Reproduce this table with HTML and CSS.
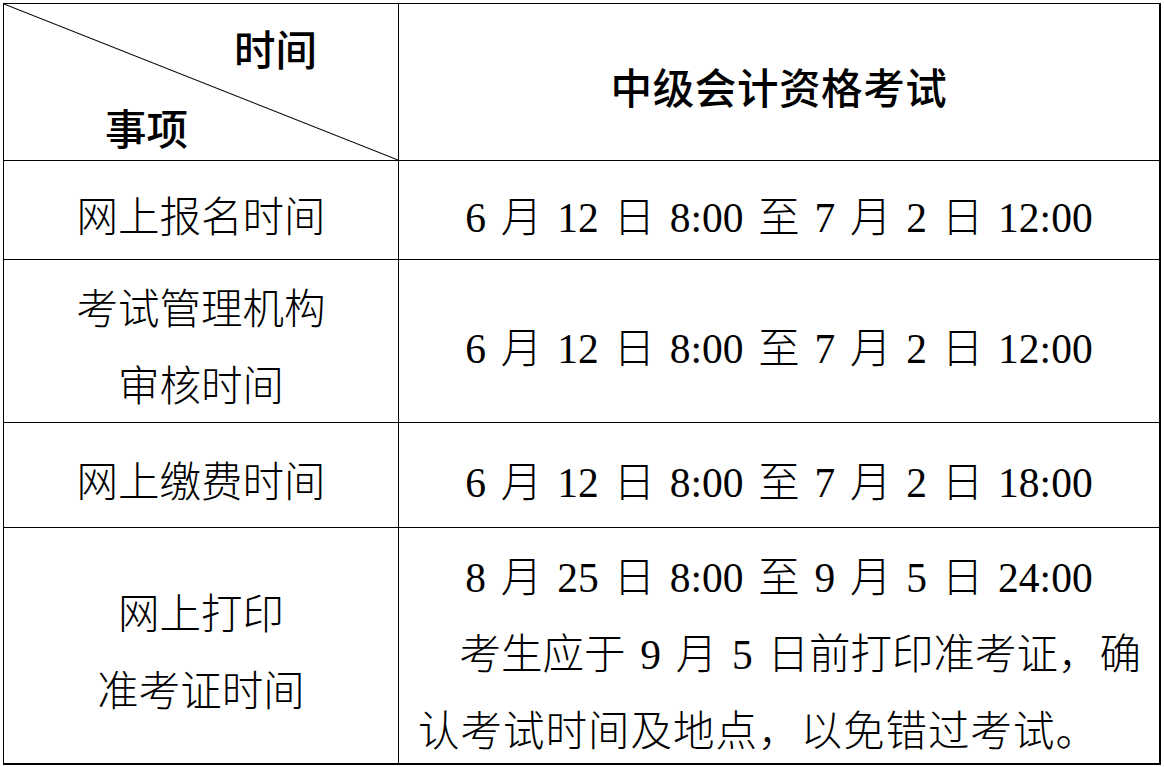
FILE: index.html
```html
<!DOCTYPE html>
<html lang="zh-CN">
<head>
<meta charset="utf-8">
<title>中级会计资格考试时间安排</title>
<link rel="stylesheet" href="styles.css">
</head>
<body>
<div class="sheet">
  <div class="cell head-left">
    <span class="hl-time">时间</span>
    <span class="hl-item">事项</span>
  </div>
  <div class="cell col2 head-right">中级会计资格考试</div>

  <div class="cell label">网上报名时间</div>
  <div class="cell col2 date">6 月 12 日 8:00 至 7 月 2 日 12:00</div>

  <div class="cell label">考试管理机构<br>审核时间</div>
  <div class="cell col2 date">6 月 12 日 8:00 至 7 月 2 日 12:00</div>

  <div class="cell label">网上缴费时间</div>
  <div class="cell col2 date">6 月 12 日 8:00 至 7 月 2 日 18:00</div>

  <div class="cell label last">网上打印<br>准考证时间</div>
  <div class="cell col2 last note">
    <div class="note-date">8 月 25 日 8:00 至 9 月 5 日 24:00</div>
    <div class="note-text">考生应于 9 月 5 日前打印准考证，确<br><span class="noindent">认考试时间及地点，以免错过考试。</span></div>
  </div>
</div>
</body>
</html>
```

FILE: styles.css
```css
html, body {
  margin: 0;
  padding: 0;
  background: #ffffff;
}

body {
  font-family: "Liberation Serif", "Noto Sans CJK SC", serif;
  font-size: 41.5px;
  font-weight: 300;
  color: #000000;
}

.sheet {
  display: grid;
  grid-template-columns: 395px 762px;
  grid-template-rows: 157px 99px 163px 105px 237px;
  width: max-content;
  margin: 3px 0 0 3px;
  border-top: 1px solid #000;
  border-left: 1px solid #000;
}

.cell {
  box-sizing: border-box;
  border-right: 1px solid #000;
  border-bottom: 1px solid #000;
  display: flex;
  flex-direction: column;
  justify-content: center;
  align-items: center;
  text-align: center;
  line-height: 77px;
  padding-top: 16px;
  white-space: nowrap;
}

.col2 {
  border-right-width: 2px;
}

.last {
  border-bottom-width: 2px;
}

.head-left {
  align-items: stretch;
  text-align: left;
  padding-top: 20px;
  font-weight: 500;
  line-height: 79px;
  background: linear-gradient(to top right,
    transparent calc(50% - 1px),
    #000 50%,
    transparent calc(50% + 1px));
}

.hl-time {
  padding-left: 230px;
}

.hl-item {
  padding-left: 101px;
}

.head-right {
  font-weight: 500;
  letter-spacing: 0.6px;
}

.date {
  word-spacing: 4.4px;
}

.note {
  align-items: stretch;
  padding: 20px 10px 0 19px;
  word-spacing: 4.4px;
}

.note-date {
  text-align: center;
  margin-right: -10px;
  margin-left: -19px;
}

.note-text {
  text-align: left;
  text-indent: 1em;
}

.noindent {
  display: inline-block;
  text-indent: 0;
  letter-spacing: 1px;
}
```
